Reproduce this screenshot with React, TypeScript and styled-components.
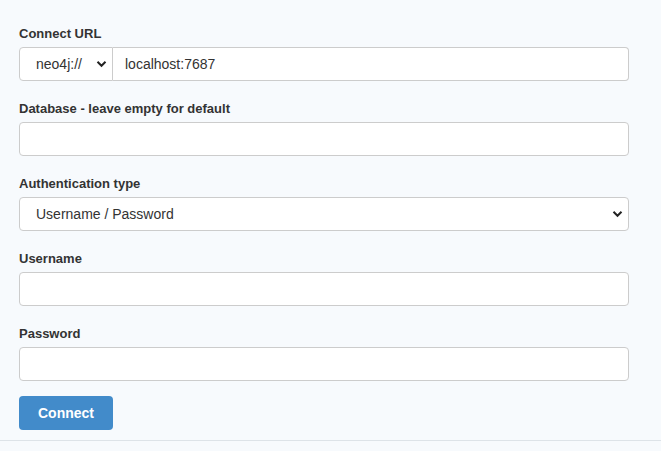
import React from 'react';
import styled, { createGlobalStyle } from 'styled-components';

const GlobalStyle = createGlobalStyle`
  html, body {
    margin: 0;
    padding: 0;
    background: #f7fafd;
    font-family: "Liberation Sans", Arial, sans-serif;
  }
`;

const Page = styled.div`
  width: 661px;
  min-height: 451px;
  background: #f7fafd;
`;

const Form = styled.form`
  padding: 24px 32px 10px 19px;
  border-bottom: 1px solid #dde3e8;
`;

const Group = styled.div`
  margin-bottom: 18px;
`;

const Label = styled.label`
  display: block;
  height: 20px;
  line-height: 20px;
  margin-bottom: 3px;
  font-size: 13px;
  font-weight: bold;
  color: #333;
`;

const InputRow = styled.div`
  display: flex;
`;

const SelectWrap = styled.div<{ $width?: string }>`
  position: relative;
  flex: ${({ $width }) => ($width ? `0 0 ${$width}` : '1')};
  display: flex;
`;

const Select = styled.select<{ $attached?: boolean }>`
  appearance: none;
  width: 100%;
  height: 34px;
  box-sizing: border-box;
  padding: 0 28px 0 16px;
  font-family: "Liberation Sans", Arial, sans-serif;
  font-size: 14px;
  color: #333;
  background: #fff;
  border: 1px solid #ccc;
  border-radius: ${({ $attached }) => ($attached ? '4px 0 0 4px' : '4px')};
  outline: none;
`;

const Chevron = styled.svg`
  position: absolute;
  right: 6px;
  top: 13px;
  width: 11px;
  height: 8px;
  pointer-events: none;
`;

const Input = styled.input<{ $attached?: boolean }>`
  flex: 1;
  width: 100%;
  height: 34px;
  box-sizing: border-box;
  padding: 0 12px;
  font-family: "Liberation Sans", Arial, sans-serif;
  font-size: 14px;
  color: #333;
  background: #fff;
  border: 1px solid #ccc;
  border-left-width: ${({ $attached }) => ($attached ? '0' : '1px')};
  border-radius: ${({ $attached }) => ($attached ? '0 4px 4px 0' : '4px')};
  outline: none;
`;

const Button = styled.button`
  display: block;
  margin-top: -3px;
  width: 94px;
  height: 34px;
  border: none;
  border-radius: 4px;
  background: #428bca;
  color: #fff;
  font-family: "Liberation Sans", Arial, sans-serif;
  font-size: 14px;
  font-weight: bold;
  cursor: pointer;
`;

const ChevronIcon = () => (
  <Chevron viewBox="0 0 11 8">
    <path d="M1.5 1.8 L5.5 5.8 L9.5 1.8" fill="none" stroke="#222" strokeWidth="2" />
  </Chevron>
);

export default function App() {
  return (
    <Page>
      <GlobalStyle />
      <Form onSubmit={(e) => e.preventDefault()}>
        <Group>
          <Label>Connect URL</Label>
          <InputRow>
            <SelectWrap $width="94px">
              <Select $attached defaultValue="neo4j://">
                <option>neo4j://</option>
                <option>bolt://</option>
              </Select>
              <ChevronIcon />
            </SelectWrap>
            <Input $attached defaultValue="localhost:7687" />
          </InputRow>
        </Group>
        <Group>
          <Label>Database - leave empty for default</Label>
          <InputRow>
            <Input />
          </InputRow>
        </Group>
        <Group>
          <Label>Authentication type</Label>
          <InputRow>
            <SelectWrap>
              <Select defaultValue="Username / Password">
                <option>Username / Password</option>
                <option>No authentication</option>
              </Select>
              <ChevronIcon />
            </SelectWrap>
          </InputRow>
        </Group>
        <Group>
          <Label>Username</Label>
          <InputRow>
            <Input />
          </InputRow>
        </Group>
        <Group>
          <Label>Password</Label>
          <InputRow>
            <Input type="password" />
          </InputRow>
        </Group>
        <Button type="submit">Connect</Button>
      </Form>
    </Page>
  );
}
